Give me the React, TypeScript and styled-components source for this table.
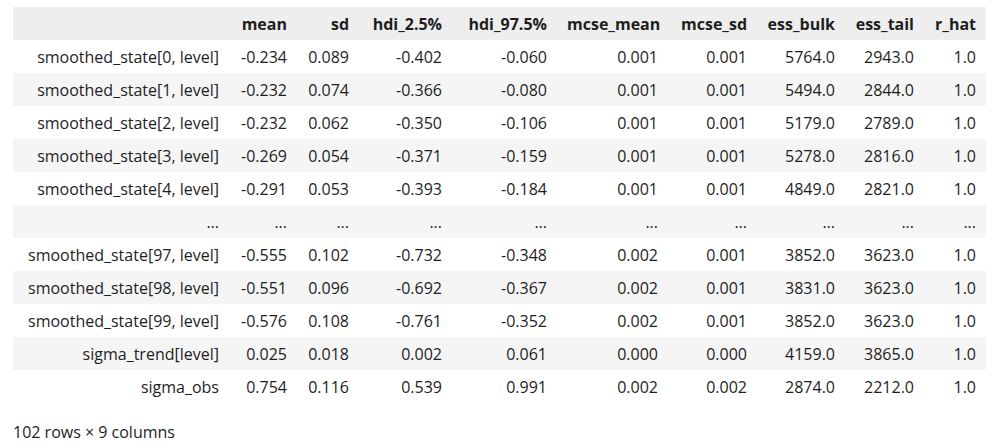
import React from "react";
import styled, { createGlobalStyle } from "styled-components";

const GlobalStyle = createGlobalStyle`
  html, body { margin: 0; padding: 0; background: #ffffff; }
  body {
    font-family: "Segoe UI", "Open Sans", "Noto Sans", sans-serif;
    color: #1e1e1e;
  }
`;

const Page = styled.div`
  padding: 7px 11px 0 13px;
`;

const Table = styled.table`
  border-collapse: collapse;
  border-spacing: 0;
  table-layout: fixed;
  width: 973px;
  font-size: 16px;
`;

const HeadRow = styled.tr`
  background: #eeeeee;
`;

const HeadCell = styled.th`
  height: 33px;
  padding: 0 10px;
  text-align: right;
  font-weight: 700;
  white-space: nowrap;
  line-height: 20px;
`;

const BodyRow = styled.tr<{ $striped: boolean }>`
  background: ${(p) => (p.$striped ? "#f5f5f5" : "#ffffff")};
`;

const IndexCell = styled.th`
  height: 33px;
  padding: 0 10px;
  text-align: right;
  font-weight: 400;
  white-space: nowrap;
  line-height: 20px;
`;

const Cell = styled.td`
  height: 33px;
  padding: 0 10px;
  text-align: right;
  white-space: nowrap;
  line-height: 20px;
`;

const Footer = styled.p`
  margin: 19px 0 0 0;
  font-size: 16px;
  line-height: 20px;
`;

const widths = [216, 68, 62, 93, 105, 111, 89, 88, 79, 62];
const columns = [
  "mean",
  "sd",
  "hdi_2.5%",
  "hdi_97.5%",
  "mcse_mean",
  "mcse_sd",
  "ess_bulk",
  "ess_tail",
  "r_hat",
];

const rows: [string, string[]][] = [
  ["smoothed_state[0, level]", ["-0.234", "0.089", "-0.402", "-0.060", "0.001", "0.001", "5764.0", "2943.0", "1.0"]],
  ["smoothed_state[1, level]", ["-0.232", "0.074", "-0.366", "-0.080", "0.001", "0.001", "5494.0", "2844.0", "1.0"]],
  ["smoothed_state[2, level]", ["-0.232", "0.062", "-0.350", "-0.106", "0.001", "0.001", "5179.0", "2789.0", "1.0"]],
  ["smoothed_state[3, level]", ["-0.269", "0.054", "-0.371", "-0.159", "0.001", "0.001", "5278.0", "2816.0", "1.0"]],
  ["smoothed_state[4, level]", ["-0.291", "0.053", "-0.393", "-0.184", "0.001", "0.001", "4849.0", "2821.0", "1.0"]],
  ["...", ["...", "...", "...", "...", "...", "...", "...", "...", "..."]],
  ["smoothed_state[97, level]", ["-0.555", "0.102", "-0.732", "-0.348", "0.002", "0.001", "3852.0", "3623.0", "1.0"]],
  ["smoothed_state[98, level]", ["-0.551", "0.096", "-0.692", "-0.367", "0.002", "0.001", "3831.0", "3623.0", "1.0"]],
  ["smoothed_state[99, level]", ["-0.576", "0.108", "-0.761", "-0.352", "0.002", "0.001", "3852.0", "3623.0", "1.0"]],
  ["sigma_trend[level]", ["0.025", "0.018", "0.002", "0.061", "0.000", "0.000", "4159.0", "3865.0", "1.0"]],
  ["sigma_obs", ["0.754", "0.116", "0.539", "0.991", "0.002", "0.002", "2874.0", "2212.0", "1.0"]],
];

export default function App() {
  return (
    <Page>
      <GlobalStyle />
      <Table>
        <colgroup>
          {widths.map((w, i) => (
            <col key={i} style={{ width: w }} />
          ))}
        </colgroup>
        <thead>
          <HeadRow>
            <HeadCell />
            {columns.map((c) => (
              <HeadCell key={c}>{c}</HeadCell>
            ))}
          </HeadRow>
        </thead>
        <tbody>
          {rows.map(([label, vals], i) => (
            <BodyRow key={i} $striped={i % 2 === 1}>
              <IndexCell>{label}</IndexCell>
              {vals.map((v, j) => (
                <Cell key={j}>{v}</Cell>
              ))}
            </BodyRow>
          ))}
        </tbody>
      </Table>
      <Footer>102 rows × 9 columns</Footer>
    </Page>
  );
}
